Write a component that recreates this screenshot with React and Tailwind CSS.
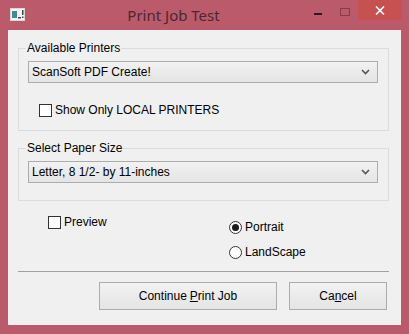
import React from 'react'

const font = { fontFamily: '"Liberation Sans", Arial, sans-serif' }

function Chevron() {
  return (
    <svg width="9" height="6" viewBox="0 0 9 6" className="text-[#555]">
      <path d="M1 1l3.5 3.5L8 1" fill="none" stroke="currentColor" strokeWidth="1.6" />
    </svg>
  )
}

function Combo({ value }) {
  return (
    <div className="flex h-[22px] w-[350px] items-center justify-between border border-[#acacac] bg-gradient-to-b from-[#f2f2f2] to-[#e4e4e4] pl-[3px] pr-[7px] text-[12px] leading-[14px] text-black">
      <span>{value}</span>
      <Chevron />
    </div>
  )
}

function Check({ label }) {
  return (
    <div className="flex h-[14px] items-center gap-[3px] text-[12px] leading-[14px] text-black">
      <span className="h-[13px] w-[13px] border border-[#333] bg-white" />
      <span>{label}</span>
    </div>
  )
}

function Radio({ label, checked }) {
  return (
    <div className="flex h-[14px] items-center gap-[3px] text-[12px] leading-[14px] text-black">
      <span className="flex h-[13px] w-[13px] items-center justify-center rounded-full border border-[#333] bg-white">
        {checked && <span className="h-[7px] w-[7px] rounded-full bg-[#1a1a1a]" />}
      </span>
      <span>{label}</span>
    </div>
  )
}

function Group({ label, className, children }) {
  return (
    <div className={`relative ml-[10px] w-[371px] border border-[#dcdcdc] ${className}`}>
      <span className="absolute -top-[8px] left-[7px] bg-[#f0f0f0] px-[1px] text-[12px] leading-[14px] text-black">
        {label}
      </span>
      {children}
    </div>
  )
}

function Button({ children, className }) {
  return (
    <button className={`flex h-[28px] items-center justify-center border border-[#acacac] bg-gradient-to-b from-[#f2f2f2] to-[#e4e4e4] text-[12px] leading-[14px] text-black ${className}`}>
      {children}
    </button>
  )
}

export default function App() {
  return (
    <div className="flex h-[334px] w-[409px] flex-col bg-[#bb5a6b]" style={font}>
      {/* title bar */}
      <div className="flex h-[30px] items-start">
        <div className="ml-[10px] mt-[8px]">
          <svg width="15" height="13" viewBox="0 0 15 13">
            <rect x="0.5" y="0.5" width="14" height="12" fill="#f4f4f4" stroke="#d8d8d8" />
            <rect x="2" y="3" width="5" height="7" fill="#3f8c92" />
            <rect x="8" y="9" width="3" height="1.5" fill="#444" />
            <rect x="12" y="2" width="1.5" height="5" fill="#444" />
            <rect x="12" y="8.5" width="1.5" height="1.5" fill="#444" />
          </svg>
        </div>
        <div className="flex-1 pl-[8px] pt-[5px] text-center text-[15px] leading-[20px] text-[#4e2630]" style={{ fontFamily: '"Noto Sans", "Open Sans", sans-serif' }}>
          Print Job Test
        </div>
        <div className="mt-[13px] h-[2px] w-[8px] bg-[#2a1a1e]" />
        <div className="ml-[18px] mt-[8px] h-[8px] w-[10px] border border-[#8a3c4a]" />
        <div className="ml-[8px] mr-[7px] flex h-[20px] w-[44px] items-center justify-center bg-[#c75050]">
          <svg width="10" height="9" viewBox="0 0 10 9">
            <path d="M1 0.5l8 8M9 0.5l-8 8" stroke="#fff" strokeWidth="1.6" />
          </svg>
        </div>
      </div>

      {/* client area */}
      <div className="mx-[8px] mb-[9px] flex flex-1 flex-col bg-[#f0f0f0]">
        <Group label="Available Printers" className="mt-[18px] h-[83px]">
          <div className="ml-[9px] mt-[12px]">
            <Combo value="ScanSoft PDF Create!" />
          </div>
          <div className="ml-[20px] mt-[20px]">
            <Check label="Show Only LOCAL PRINTERS" />
          </div>
        </Group>

        <Group label="Select Paper Size" className="mt-[17px] h-[53px]">
          <div className="ml-[9px] mt-[12px]">
            <Combo value="Letter, 8 1/2- by 11-inches" />
          </div>
        </Group>

        <div className="mt-[14px] flex">
          <div className="ml-[40px] w-[181px]">
            <Check label="Preview" />
          </div>
          <div className="mt-[5px] flex flex-col gap-[11px]">
            <Radio label="Portrait" checked />
            <Radio label="LandScape" />
          </div>
        </div>

        <div className="ml-[10px] mt-[12px] h-px w-[371px] bg-[#a0a0a0]" />

        <div className="mt-[10px] flex">
          <Button className="ml-[91px] w-[178px]">
            Continue <span className="ml-[3px] underline">P</span>rint Job
          </Button>
          <Button className="ml-[12px] w-[98px]">
            Ca<span className="underline">n</span>cel
          </Button>
        </div>
      </div>
    </div>
  )
}
